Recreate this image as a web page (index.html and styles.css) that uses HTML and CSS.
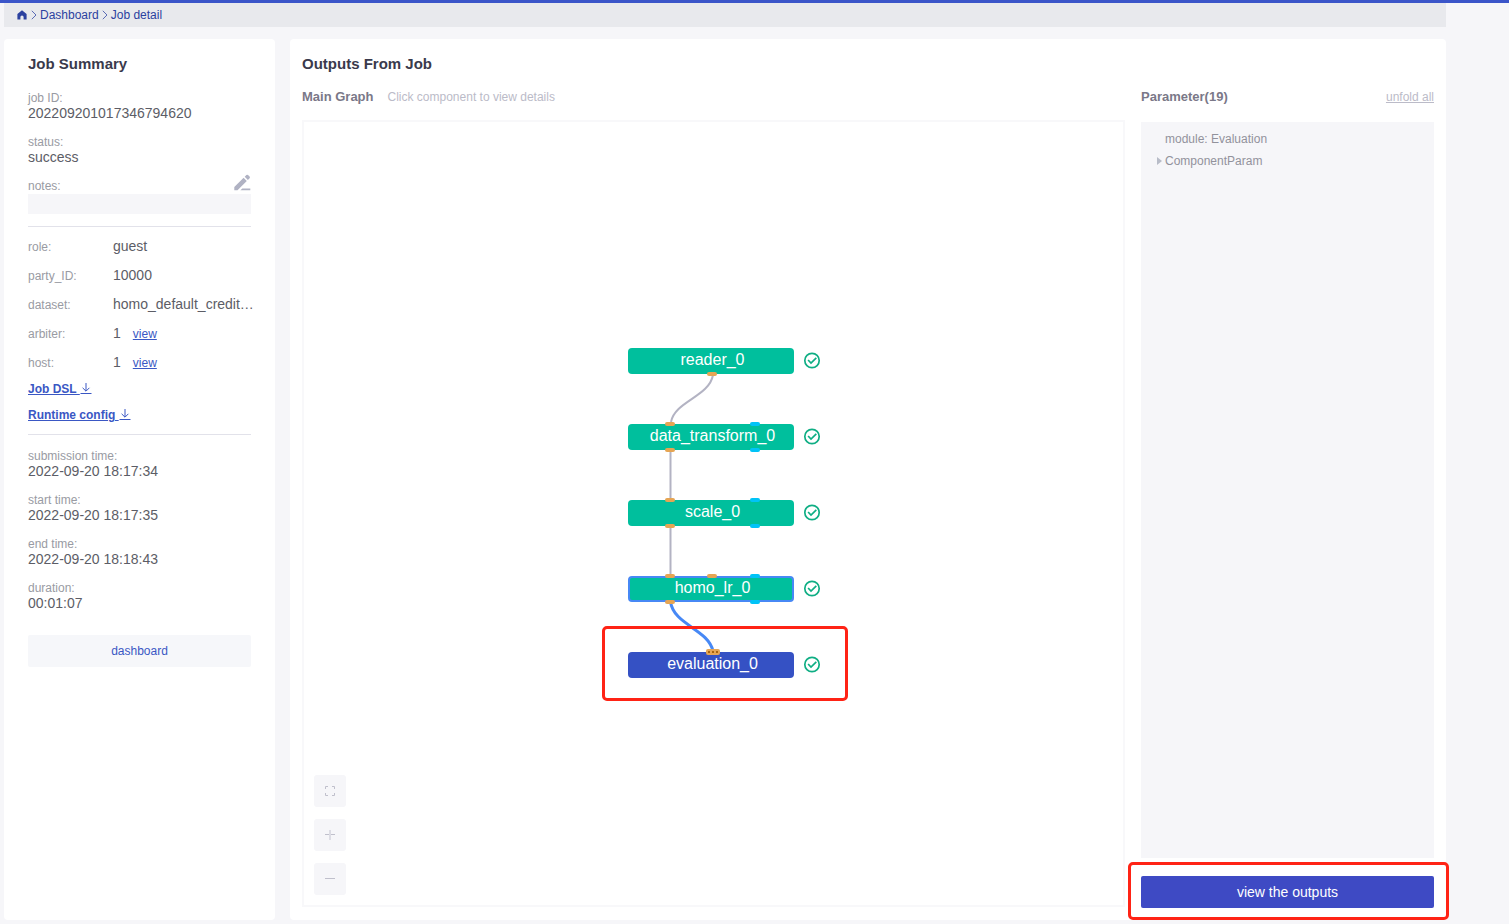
FILE: index.html
```html
<!DOCTYPE html>
<html lang="en">
<head>
<meta charset="utf-8">
<title>Job detail</title>
<link rel="stylesheet" href="styles.css">
</head>
<body>
<div class="page">
  <nav class="crumbs" aria-label="Breadcrumb">
    <a class="crumb-home" href="#" aria-label="Home"><svg width="10" height="10" viewBox="0 0 10 10"><path d="M5 0.3 L9.6 4.1 V9.4 H6.6 V7 A1.6 1.6 0 0 0 3.4 7 V9.4 H0.4 V4.1 Z" fill="#2b419f"/></svg></a>
    <svg class="crumb-sep" width="6" height="10" viewBox="0 0 6 10"><path d="M0.8 0.8 L5 5 L0.8 9.2" fill="none" stroke="#5b6bb5"/></svg>
    <a href="#">Dashboard</a>
    <svg class="crumb-sep" width="6" height="10" viewBox="0 0 6 10"><path d="M0.8 0.8 L5 5 L0.8 9.2" fill="none" stroke="#5b6bb5"/></svg>
    <a href="#">Job detail</a>
  </nav>
  <div class="columns">
    <aside class="card summary">
      <h2 class="title">Job Summary</h2>
      <dl class="stack">
        <div><dt>job ID:</dt><dd>202209201017346794620</dd></div>
        <div><dt>status:</dt><dd>success</dd></div>
      </dl>
      <div class="notes-head">
        <label for="notes">notes:</label>
        <button class="edit" type="button" aria-label="Edit notes"><svg width="17" height="17" viewBox="0 0 17 17" fill="#b0b2c3"><path d="M0.3 16.3 V13 L9.6 3.8 L12.8 7 L3.5 16.3 Z M10.7 2.7 L12.4 1 Q13.2 0.3 14 1 L15.6 2.6 Q16.4 3.4 15.6 4.2 L13.9 5.9 Z M8.3 14.4 H16.3 V16.3 H6.4 Z"/></svg></button>
      </div>
      <input class="notes" id="notes" type="text">
      <dl class="facts">
        <div><dt>role:</dt><dd>guest</dd></div>
        <div><dt>party_ID:</dt><dd>10000</dd></div>
        <div><dt>dataset:</dt><dd>homo_default_credit…</dd></div>
        <div><dt>arbiter:</dt><dd>1<a class="view" href="#">view</a></dd></div>
        <div><dt>host:</dt><dd>1<a class="view" href="#">view</a></dd></div>
      </dl>
      <div class="downloads">
        <a href="#">Job DSL <svg width="12" height="11" viewBox="0 0 12 11"><path d="M6 0 V8 M2.6 4.8 L6 8.2 L9.4 4.8 M0.5 10.5 H11.5" fill="none" stroke="#3a57c4"/></svg></a>
        <a href="#">Runtime config <svg width="12" height="11" viewBox="0 0 12 11"><path d="M6 0 V8 M2.6 4.8 L6 8.2 L9.4 4.8 M0.5 10.5 H11.5" fill="none" stroke="#3a57c4"/></svg></a>
      </div>
      <dl class="stack times">
        <div><dt>submission time:</dt><dd>2022-09-20 18:17:34</dd></div>
        <div><dt>start time:</dt><dd>2022-09-20 18:17:35</dd></div>
        <div><dt>end time:</dt><dd>2022-09-20 18:18:43</dd></div>
        <div><dt>duration:</dt><dd>00:01:07</dd></div>
      </dl>
      <button class="to-dashboard" type="button">dashboard</button>
    </aside>
    <main class="card outputs">
      <h2 class="title">Outputs From Job</h2>
      <div class="work">
        <section class="graph-side">
          <div class="sub-head"><h3>Main Graph</h3><span class="hint">Click component to view details</span></div>
          <div class="canvas">
            <div class="stage">
              <button class="node n1" type="button">reader_0</button>
              <button class="node n2" type="button">data_transform_0</button>
              <button class="node n3" type="button">scale_0</button>
              <button class="node n4 linked" type="button">homo_lr_0</button>
              <button class="node n5 selected" type="button">evaluation_0</button>
              <svg class="wires" width="200" height="332" viewBox="0 0 200 332">
                <defs>
                  <rect id="port" x="-5" y="-2" width="10" height="4" rx="2"/>
                  <g id="ok" fill="none" stroke="#0fae84" stroke-width="1.7"><circle r="7.2"/><path d="M-3.9 -0.5 L-1 2.5 L4.3 -2.7"/></g>
                </defs>
                <g fill="none" stroke="#b3b3c3" stroke-width="2">
                  <path d="M85 28 C81 50 47 54 43 75"/>
                  <path d="M42.5 103 V152 M42.5 179 V228"/>
                  <path d="M42.5 255 C46 278 80 282 85 304" stroke="#4788f5" stroke-width="3"/>
                </g>
                <g fill="#e6a553">
                  <use href="#port" x="84" y="27"/>
                  <use href="#port" x="42" y="77"/><use href="#port" x="42" y="103"/>
                  <use href="#port" x="42" y="153"/><use href="#port" x="42" y="179"/>
                  <use href="#port" x="42" y="229"/><use href="#port" x="84" y="229"/><use href="#port" x="42" y="255"/>
                  <rect x="78" y="302" width="14" height="6" rx="2"/>
                </g>
                <g fill="#00c3f7">
                  <use href="#port" x="127" y="77"/><use href="#port" x="127" y="103"/>
                  <use href="#port" x="127" y="153"/><use href="#port" x="127" y="179"/>
                  <use href="#port" x="127" y="229"/><use href="#port" x="127" y="255"/>
                </g>
                <path d="M80 305 h2 m2 0 h2 m2 0 h2" stroke="#a8640f" stroke-width="2"/>
                <use href="#ok" x="184" y="13.500"/><use href="#ok" x="184" y="89.500"/><use href="#ok" x="184" y="165.500"/><use href="#ok" x="184" y="241.500"/><use href="#ok" x="184" y="317.500"/>
              </svg>
              <div class="mark mark-node"></div>
            </div>
            <div class="tools">
              <button type="button" aria-label="Fit to screen"><svg width="12" height="12" viewBox="0 0 12 12"><path d="M1.500 4 V1.500 H4 M8 1.500 H10.500 V4 M10.500 8 V10.500 H8 M4 10.500 H1.500 V8" fill="none" stroke="#c0c0cc"/></svg></button>
              <button type="button" aria-label="Zoom in"><svg width="12" height="12" viewBox="0 0 12 12"><path d="M1 5.500 H11" fill="none" stroke="#c0c0cc"/><path d="M6 1 V11" fill="none" stroke="#dcdce4" stroke-width="2"/></svg></button>
              <button type="button" aria-label="Zoom out"><svg width="12" height="12" viewBox="0 0 12 12"><path d="M1 5.500 H11" fill="none" stroke="#c0c0cc"/></svg></button>
            </div>
          </div>
        </section>
        <section class="param-side">
          <div class="sub-head"><h3>Parameter(19)</h3><a class="unfold" href="#">unfold all</a></div>
          <ul class="params">
            <li>module: Evaluation</li>
            <li class="branch">ComponentParam</li>
          </ul>
          <div class="action">
            <button class="view-outputs" type="button">view the outputs</button>
            <div class="mark mark-action"></div>
          </div>
        </section>
      </div>
    </main>
  </div>
</div>
</body>
</html>
```
FILE: styles.css
```css
* { box-sizing: border-box; }
body {
  margin: 0;
  background: #f6f6f9;
  color: #534c5d;
  font: 12px/16px "Liberation Sans", Arial, sans-serif;
}
h2, h3, dl, dd, ul { margin: 0; padding: 0; }
button { border: 0; padding: 0; font: inherit; cursor: pointer; }
.page {
  min-height: 100vh;
  display: flex;
  flex-direction: column;
  border-top: 3px solid #3b55c9;
  padding: 0 63px 4px 4px;
}
.crumbs {
  display: flex;
  align-items: center;
  gap: 3px;
  height: 24px;
  padding-left: 13px;
  background: #e8e9ed;
}
.crumbs a { color: #2b419f; text-decoration: none; }
.crumb-home { display: flex; }
.crumb-home + .crumb-sep { margin-left: 1px; }
.columns {
  flex: 1;
  display: grid;
  grid-template-columns: 271px minmax(0, 1fr);
  gap: 15px;
  margin-top: 12px;
}
.card { background: #fff; border-radius: 4px; }
.title { color: #3a3a4c; font-size: 15px; line-height: 18px; }

.summary { padding: 16px 24px; }
.stack { display: grid; gap: 14px; margin-top: 17px; }
dt, .notes-head label { color: #999ba3; }
dd { color: #5c5d66; font-size: 14px; line-height: 14px; }
.notes-head {
  display: flex;
  justify-content: space-between;
  align-items: flex-end;
  height: 30px;
}
.edit { display: flex; height: 20px; background: none; }
.notes {
  display: block;
  width: 100%;
  height: 20px;
  border: 0;
  background: #f6f6f9;
}
.facts {
  display: grid;
  gap: 13px;
  margin-top: 12px;
  padding-top: 12px;
  border-top: 1px solid #e2e2ea;
}
.facts div { display: grid; grid-template-columns: 85px minmax(0, 1fr); }
.facts dd { display: flex; white-space: nowrap; }
.facts a, .downloads a { color: #3a57c4; }
.view { margin-left: 12px; font-size: 12px; line-height: 16px; }
.downloads {
  display: grid;
  justify-items: start;
  gap: 10px;
  margin-top: 10px;
  padding-bottom: 11px;
  border-bottom: 1px solid #e2e2ea;
  font-weight: bold;
}
.downloads svg { vertical-align: -1px; }
.times { margin-top: 13px; }
.to-dashboard {
  width: 100%;
  height: 32px;
  margin-top: 25px;
  border-radius: 2px;
  background: #f6f7fa;
  color: #3a57c4;
}

.outputs { display: flex; flex-direction: column; padding: 16px 12px 12px; }
.work {
  flex: 1;
  display: grid;
  grid-template-columns: minmax(0, 1fr) 293px;
  gap: 16px;
  margin-top: 15px;
}
.graph-side, .param-side { display: flex; flex-direction: column; }
.sub-head { display: flex; align-items: center; height: 18px; margin-bottom: 14px; }
.sub-head h3 { color: #7a7888; font-size: 13px; }
.hint { margin-left: 14px; color: #bbbbc8; }
.canvas {
  position: relative;
  flex: 1;
  display: flex;
  align-items: flex-end;
  margin-bottom: 1px;
  border: 2px solid #f8f8fa;
  padding: 10px;
}
.stage { position: absolute; left: calc(50% - 86px); top: calc(50% - 167px); width: 166px; height: 332px; }
.node {
  position: absolute;
  left: 0;
  width: 166px;
  height: 26px;
  padding: 0 0 2px 4px;
  border-radius: 4px;
  background: #00bf9d;
  color: #fff;
  font-size: 16px;
  line-height: 20px;
}
.n1 { top: 1px; }
.n2 { top: 77px; }
.n3 { top: 153px; }
.n4 { top: 229px; }
.n5 { top: 305px; }
.linked { border: 2px solid #4788f5; }
.selected { background: #3551c4; }
.wires { position: absolute; left: 0; top: 0; pointer-events: none; }
.mark { position: absolute; border: 3px solid #ff2315; border-radius: 5px; pointer-events: none; }
.mark-node { left: -26px; top: 279px; width: 246px; height: 75px; }
.tools { display: grid; gap: 12px; }
.tools button {
  display: grid;
  place-items: center;
  width: 32px;
  height: 32px;
  border-radius: 3px;
  background: #f6f6f9;
}
.param-side .sub-head { justify-content: space-between; }
.unfold { color: #bbbbc8; }
.params {
  flex: 1;
  margin-top: 2px;
  padding: 6px 24px;
  background: #f6f6f9;
  color: #92929c;
  line-height: 22px;
  list-style: none;
}
.branch::before {
  content: "";
  display: inline-block;
  margin-left: -8px;
  margin-right: 3px;
  border: solid transparent;
  border-width: 4px 0 4px 5px;
  border-left-color: #b8bcc8;
}
.action { position: relative; margin-top: 18px; }
.view-outputs {
  display: block;
  width: 100%;
  height: 32px;
  border-radius: 2px;
  background: #3e4ac4;
  color: #fff;
  font-size: 14px;
}
.mark-action { inset: -14px -15px -12px -13px; }
```
